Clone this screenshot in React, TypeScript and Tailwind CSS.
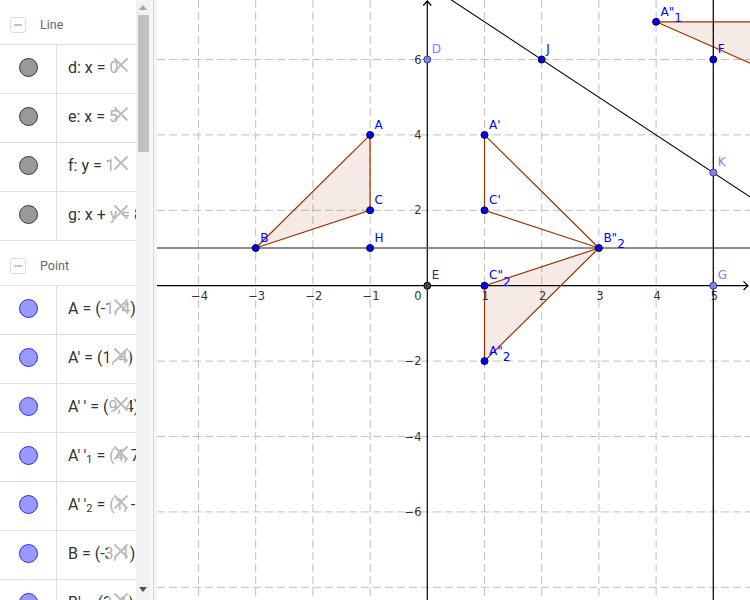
import React from "react";

const X = (x: number) => 427.3 + 57.2 * x;
const Y = (y: number) => 285.7 - 37.7 * y;

type Row = { text: React.ReactNode; kind: "line" | "point" };

const lineRows: Row[] = [
  { text: "d: x = 0", kind: "line" },
  { text: "e: x = 5", kind: "line" },
  { text: "f: y = 1", kind: "line" },
  { text: "g: x + y = 8", kind: "line" },
];

const pointRows: Row[] = [
  { text: "A = (-1, 4)", kind: "point" },
  { text: "A' = (1, 4)", kind: "point" },
  { text: "A'\u2009' = (9, 4)", kind: "point" },
  {
    text: (
      <>
        A'{"\u2009"}'<sub className="text-[11px]">1</sub> = (4, 7)
      </>
    ),
    kind: "point",
  },
  {
    text: (
      <>
        A'{"\u2009"}'<sub className="text-[11px]">2</sub> = (1, -2)
      </>
    ),
    kind: "point",
  },
  { text: "B = (-3, 1)", kind: "point" },
  { text: "B' = (3, 1)", kind: "point" },
];

function Header({ label, top }: { label: string; top: boolean }) {
  return (
    <div
      className={
        top
          ? "h-[44px] flex items-center pt-[6px] pl-[10px] gap-[14px]"
          : "h-[45px] border-t border-[#dddddd] flex items-center pt-[6px] pl-[10px] gap-[14px]"
      }
    >
      <div className="w-[16px] h-[16px] rounded-[3px] border border-[#dcdcdc] flex items-center justify-center">
        <div className="w-[8px] h-[1.5px] bg-[#c4c4c4]" />
      </div>
      <span className="text-[12.5px] text-[#666666]">{label}</span>
    </div>
  );
}

function ItemRow({ row }: { row: Row }) {
  return (
    <div className="h-[49px] border-t border-[#dddddd] flex">
      <div className="w-[57px] shrink-0 border-r border-[#dddddd] flex items-center justify-center pb-[3px]">
        <div
          className={
            row.kind === "line"
              ? "w-[19px] h-[19px] rounded-full bg-[#999999] border border-[#3a3a3a]"
              : "w-[19px] h-[19px] rounded-full bg-[#9999ff] border border-[#2a2aff]"
          }
        />
      </div>
      <div className="flex-1 min-w-0 relative flex items-center pl-[11px] pb-[3px] whitespace-nowrap text-[16px] text-[#333333]">
        <span>{row.text}</span>
        <div className="absolute left-[51px] top-[7px] w-[22px] h-[26px] bg-white/60" />
        <svg
          className="absolute left-[56px] top-[12px]"
          width="16"
          height="16"
          viewBox="0 0 16 16"
        >
          <path d="M1.5 1.5L14.5 14.5M14.5 1.5L1.5 14.5" stroke="#bdbdbd" strokeWidth="2" />
        </svg>
      </div>
    </div>
  );
}

type P = { x: number; y: number; label: string; sub?: string; kind: "blue" | "lav" | "dark" };

const points: P[] = [
  { x: -1, y: 4, label: "A", kind: "blue" },
  { x: -1, y: 2, label: "C", kind: "blue" },
  { x: -3, y: 1, label: "B", kind: "blue" },
  { x: -1, y: 1, label: "H", kind: "blue" },
  { x: 1, y: 4, label: "A'", kind: "blue" },
  { x: 1, y: 2, label: "C'", kind: "blue" },
  { x: 3, y: 1, label: 'B"', sub: "2", kind: "blue" },
  { x: 1, y: 0, label: 'C"', sub: "2", kind: "blue" },
  { x: 1, y: -2, label: 'A"', sub: "2", kind: "blue" },
  { x: 2, y: 6, label: "J", kind: "blue" },
  { x: 4, y: 7, label: 'A"', sub: "1", kind: "blue" },
  { x: 5, y: 6, label: "F", kind: "blue" },
  { x: 0, y: 6, label: "D", kind: "lav" },
  { x: 5, y: 3, label: "K", kind: "lav" },
  { x: 5, y: 0, label: "G", kind: "lav" },
  { x: 0, y: 0, label: "E", kind: "dark" },
];

function poly(pts: [number, number][]) {
  return pts.map(([x, y]) => `${X(x)},${Y(y)}`).join(" ");
}

function Graphics() {
  const vx = [-4, -3, -2, -1, 1, 2, 3, 4, 5];
  const hy = [6, 4, 2, -2, -4, -6, -8];
  const xl = [-4, -3, -2, -1, 1, 2, 3, 4, 5];
  const yl = [6, 4, 2, -2, -4, -6];
  const fmt = (n: number) => (n < 0 ? "\u2212" + Math.abs(n) : String(n));
  const polyStroke = "#993300";
  const polyFill = "rgba(153,51,0,0.1)";
  const font = "'DejaVu Sans', sans-serif";
  return (
    <svg width="593" height="600" viewBox="157 0 593 600" className="shrink-0 bg-white">
      {vx.map((x) => (
        <line key={"v" + x} x1={X(x)} y1={0} x2={X(x)} y2={600} stroke="#c0c0c0" strokeWidth="1" strokeDasharray="8 4" />
      ))}
      {hy.map((y) => (
        <line key={"h" + y} x1={157} y1={Y(y)} x2={750} y2={Y(y)} stroke="#c0c0c0" strokeWidth="1" strokeDasharray="8 4" />
      ))}
      <line x1={157} y1={Y(0)} x2={748} y2={Y(0)} stroke="#000" strokeWidth="1.2" />
      <line x1={X(0)} y1={1} x2={X(0)} y2={600} stroke="#000" strokeWidth="1.2" />
      <path d={`M${X(0) - 4} 5.5L${X(0)} 1L${X(0) + 4} 5.5`} fill="none" stroke="#000" strokeWidth="1.2" />
      <path d={`M743.5 ${Y(0) - 4.3}L748 ${Y(0)}L743.5 ${Y(0) + 4.3}`} fill="none" stroke="#000" strokeWidth="1.2" />
      {xl.map((x) => (
        <text key={"xl" + x} x={X(x) + 1} y={300} fontSize="11.5" fill="#333" textAnchor="middle" fontFamily={font}>
          {fmt(x)}
        </text>
      ))}
      <text x={418} y={300} fontSize="11.5" fill="#333" textAnchor="middle" fontFamily={font}>
        0
      </text>
      {yl.map((y) => (
        <text key={"yl" + y} x={421.5} y={Y(y) + 4} fontSize="11.5" fill="#333" textAnchor="end" fontFamily={font}>
          {fmt(y)}
        </text>
      ))}
      <polygon points={poly([[-1, 4], [-3, 1], [-1, 2]])} fill={polyFill} stroke={polyStroke} strokeWidth="1.2" />
      <polygon points={poly([[1, 4], [3, 1], [1, 2]])} fill="none" stroke={polyStroke} strokeWidth="1.2" />
      <polygon points={poly([[1, 0], [3, 1], [1, -2]])} fill={polyFill} stroke={polyStroke} strokeWidth="1.2" />
      <polygon points={poly([[4, 7], [9, 7], [7, 5]])} fill={polyFill} stroke={polyStroke} strokeWidth="1.2" />
      <line x1={157} y1={Y(1)} x2={750} y2={Y(1)} stroke="#666" strokeWidth="1.6" />
      <line x1={X(5)} y1={0} x2={X(5)} y2={600} stroke="#000" strokeWidth="1.2" />
      <line x1={X(0)} y1={Y(8)} x2={X(8)} y2={Y(0)} stroke="#000" strokeWidth="1.1" />
      {points.map((p, i) => {
        const fill = p.kind === "blue" ? "#0000ff" : p.kind === "lav" ? "#7f7fff" : "#444444";
        const stroke = p.kind === "lav" ? "#333366" : "#000";
        const lc = p.kind === "blue" ? "#0000ff" : p.kind === "lav" ? "#7f7fff" : "#333333";
        return (
          <g key={i}>
            <circle cx={X(p.x)} cy={Y(p.y)} r="3.5" fill={fill} stroke={stroke} strokeWidth="0.9" />
            <text x={X(p.x) + 4.5} y={Y(p.y) - 6.3} fontSize="12" fill={lc} fontFamily={font}>
              {p.label}
              {p.sub ? <tspan dy="6.5">{p.sub}</tspan> : null}
            </text>
          </g>
        );
      })}
    </svg>
  );
}

export default function App() {
  return (
    <div
      className="w-[750px] h-[600px] flex overflow-hidden bg-white"
      style={{ fontFamily: "Roboto, 'Noto Sans', sans-serif" }}
    >
      <div className="w-[136px] shrink-0 h-full overflow-hidden">
        <Header label="Line" top />
        {lineRows.map((r, i) => (
          <ItemRow key={"l" + i} row={r} />
        ))}
        <Header label="Point" top={false} />
        {pointRows.map((r, i) => (
          <ItemRow key={"p" + i} row={r} />
        ))}
      </div>
      <div className="w-[14px] shrink-0 h-full bg-[#f1f1f1] flex flex-col items-center">
        <div className="h-[14px] flex items-center justify-center">
          <svg width="8" height="5" viewBox="0 0 8 5">
            <path d="M0 5L4 0L8 5Z" fill="#a3a3a3" />
          </svg>
        </div>
        <div className="w-[11px] h-[137px] mt-[1px] bg-[#c1c1c1]" />
        <div className="flex-1" />
        <div className="h-[22px] flex items-center justify-center">
          <svg width="8" height="5" viewBox="0 0 8 5">
            <path d="M0 0L4 5L8 0Z" fill="#505050" />
          </svg>
        </div>
      </div>
      <div className="w-[7px] shrink-0 h-full flex">
        <div className="w-[3px] bg-[#f7f7f7]" />
        <div className="w-[1px] bg-[#d8d8d8]" />
        <div className="w-[3px] bg-[#f4f4f4]" />
      </div>
      <Graphics />
    </div>
  );
}
